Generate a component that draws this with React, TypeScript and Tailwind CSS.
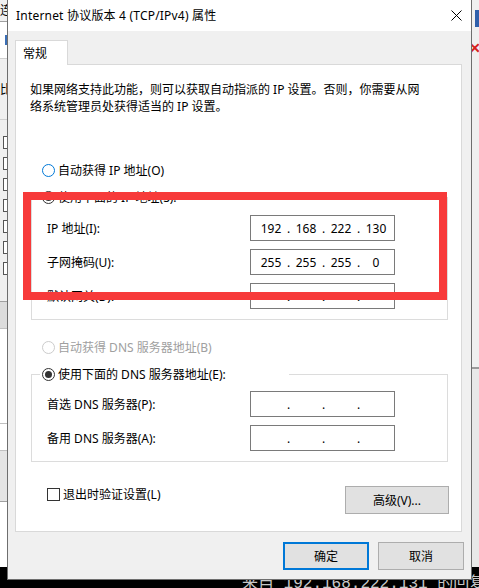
import React from "react";

function Radio({ checked, kind }: { checked?: boolean; kind: "focus" | "normal" | "disabled" }) {
  const cls =
    kind === "focus"
      ? "border-[#0078d7]"
      : kind === "disabled"
      ? "border-[#cccccc]"
      : "border-[#333333]";
  return (
    <span className={`w-[13px] h-[13px] rounded-full border bg-white flex items-center justify-center shrink-0 ${cls}`}>
      {checked && <span className="w-[7px] h-[7px] rounded-full bg-[#333333]" />}
    </span>
  );
}

function RadioRow({ label, checked, kind }: { label: string; checked?: boolean; kind: "focus" | "normal" | "disabled" }) {
  return (
    <div className={`h-[18px] flex items-center gap-[3px] whitespace-nowrap ${kind === "disabled" ? "text-[#a0a0a0]" : "text-black"}`}>
      <Radio checked={checked} kind={kind} />
      <span>{label}</span>
    </div>
  );
}

function IpField({ parts }: { parts?: string[] }) {
  return (
    <div className="w-[145px] h-[26px] border border-[#7a7a7a] bg-white flex items-center pl-[5px]">
      {[0, 1, 2, 3].map((i) => (
        <React.Fragment key={i}>
          {i > 0 && <span className="w-[5px] text-center">.</span>}
          <span className="w-[30px] text-center">{parts ? parts[i] : ""}</span>
        </React.Fragment>
      ))}
    </div>
  );
}

function FieldRow({ label, parts }: { label: string; parts?: string[] }) {
  return (
    <div className="h-[26px] flex items-center">
      <span className="w-[218px] pl-[15px] whitespace-nowrap">{label}</span>
      <IpField parts={parts} />
    </div>
  );
}

export default function App() {
  return (
    <div className="relative w-[479px] h-[588px] overflow-hidden bg-black font-['Noto_Sans','Noto_Sans_CJK_SC',sans-serif] text-[12px] leading-[17px] text-black">
      {/* terminal text behind */}
      <div className="absolute left-[242px] top-[575px] whitespace-nowrap text-[#c8c8c8] text-[16px] leading-[18px] font-['Liberation_Mono','Noto_Sans_CJK_SC',monospace]">
        来自 192.168.222.131 的回复: 字
      </div>
      <div className="absolute left-0 top-[545px] w-[7px] overflow-hidden text-[12px] text-[#333]">
        <div className="-ml-[6px]">叹</div>
      </div>

      {/* left background window */}
      <div className="absolute left-0 top-0 w-[7px] h-[567px] bg-[#f0f0f0] overflow-hidden flex flex-col">
        <div className="h-[21px] flex justify-end items-center text-[12px] overflow-hidden">
          <span className="-mr-[5px]">连</span>
        </div>
        <div className="h-px bg-[#a0a0a0]" />
        <div className="h-[36px] bg-white flex items-center justify-end">
          <span className="w-[2px] h-[10px] bg-[#3b6fb6]" />
        </div>
        <div className="h-px bg-[#d0d0d0]" />
        <div className="h-[60px] flex items-center justify-end overflow-hidden">
          <span className="-mr-[5px]">比</span>
        </div>
        <div className="h-px bg-[#d0d0d0]" />
        <div className="flex flex-col gap-[8px] pt-[16px] items-end">
          {[0, 1, 2, 3, 4, 5, 6].map((i) => (
            <span key={i} className="w-[4px] h-[13px] border border-r-0 border-[#555] bg-white" />
          ))}
        </div>
        <div className="h-[26px]" />
        <div className="h-px bg-[#a0a0a0]" />
        <div className="h-[26px] bg-[#dcdcdc]" />
        <div className="h-px bg-[#c0c0c0]" />
        <div className="h-[94px] bg-white" />
        <div className="h-px bg-[#c0c0c0]" />
        <div className="h-[26px] bg-white" />
        <div className="h-px bg-[#c0c0c0]" />
        <div className="h-[50px] bg-[#e4e4e4]" />
        <div className="h-px bg-[#a0a0a0]" />
        <div className="flex-1 bg-white" />
      </div>

      {/* right background window */}
      <div className="absolute right-0 top-0 w-[7px] h-[567px] bg-[#f0f0f0] flex flex-col">
        <div className="h-[10px]" />
        <div className="h-[17px] flex justify-end">
          <span className="w-[4px] h-[17px] bg-[#2f5faa]" />
        </div>
        <div className="h-[13px]" />
        <div className="h-[15px] flex justify-end items-center text-[#d62020] text-[14px] font-bold">
          <span className="-mr-[2px]">✕</span>
        </div>
        <div className="h-[312px]" />
        <div className="h-[2px] bg-[#9a9a9a]" />
        <div className="flex-1 bg-[#e8e8e8]" />
      </div>

      {/* dialog window */}
      <div className="absolute left-[7px] top-0 w-[465px] h-[580px] border-x border-b border-[#6e6e6e] flex flex-col bg-[#f0f0f0]">
        <div className="h-[31px] bg-white flex items-center justify-between pl-[8px] shrink-0">
          <span className="whitespace-nowrap text-[12px] tracking-[0.2px]">Internet 协议版本 4 (TCP/IPv4) 属性</span>
          <span className="w-[30px] h-[31px] flex items-center justify-center">
            <svg width="11" height="11" viewBox="0 0 11 11">
              <path d="M0.5 0.5 L10.5 10.5 M10.5 0.5 L0.5 10.5" stroke="#000" strokeWidth="1" />
            </svg>
          </span>
        </div>

        <div className="flex-1 flex flex-col pt-[9px] pl-[7px]">
          <div className="relative z-10 w-[53px] h-[25px] bg-white border-x border-t border-[#d9d9d9] pl-[7px] flex items-center">
            常规
          </div>
          <div className="-mt-px w-[447px] h-[468px] bg-white border border-[#d9d9d9] flex flex-col">
            <div className="pt-[16px] pl-[14px] whitespace-nowrap">
              <div>如果网络支持此功能，则可以获取自动指派的 IP 设置。否则，你需要从网</div>
              <div>络系统管理员处获得适当的 IP 设置。</div>
            </div>

            <div className="mt-[46px] pl-[26px]">
              <RadioRow label="自动获得 IP 地址(O)" kind="focus" />
            </div>

            <div className="relative mt-[18px] ml-[15px] w-[417px] border border-[#dcdcdc] pt-[17px] pb-[10px] flex flex-col gap-[8px]">
              <div className="absolute -top-[10px] left-[8px] w-[249px] pl-[2px] bg-white">
                <RadioRow label="使用下面的 IP 地址(S):" checked kind="normal" />
              </div>
              <FieldRow label="IP 地址(I):" parts={["192", "168", "222", "130"]} />
              <FieldRow label="子网掩码(U):" parts={["255", "255", "255", "0"]} />
              <FieldRow label="默认网关(D):" />
            </div>

            <div className="mt-[18px] pl-[26px]">
              <RadioRow label="自动获得 DNS 服务器地址(B)" kind="disabled" />
            </div>

            <div className="relative mt-[18px] ml-[15px] w-[417px] border border-[#dcdcdc] pt-[16px] pb-[10px] flex flex-col gap-[8px]">
              <div className="absolute -top-[10px] left-[8px] w-[249px] pl-[2px] bg-white">
                <RadioRow label="使用下面的 DNS 服务器地址(E):" checked kind="normal" />
              </div>
              <FieldRow label="首选 DNS 服务器(P):" parts={["", "", "", ""]} />
              <FieldRow label="备用 DNS 服务器(A):" parts={["", "", "", ""]} />
            </div>

            <div className="mt-[24px] h-[28px] flex justify-between pl-[31px] pr-[12px]">
              <div className="h-[17px] flex items-center gap-[3px]">
                <span className="w-[13px] h-[13px] border border-[#333333] bg-white" />
                <span>退出时验证设置(L)</span>
              </div>
              <div className="w-[104px] h-[28px] bg-[#e1e1e1] border border-[#adadad] flex items-center justify-center">
                高级(V)...
              </div>
            </div>
          </div>

          <div className="mt-[10px] flex justify-end gap-[9px] pr-[7px]">
            <div className="w-[86px] h-[28px] bg-[#e1e1e1] border-2 border-[#0078d7] flex items-center justify-center">
              确定
            </div>
            <div className="w-[86px] h-[28px] bg-[#e1e1e1] border border-[#adadad] flex items-center justify-center">
              取消
            </div>
          </div>
        </div>
      </div>

      {/* red annotation */}
      <div className="absolute left-[23px] top-[192px] w-[424px] h-[108px] border-8 border-[#f73a3a]" />
    </div>
  );
}
